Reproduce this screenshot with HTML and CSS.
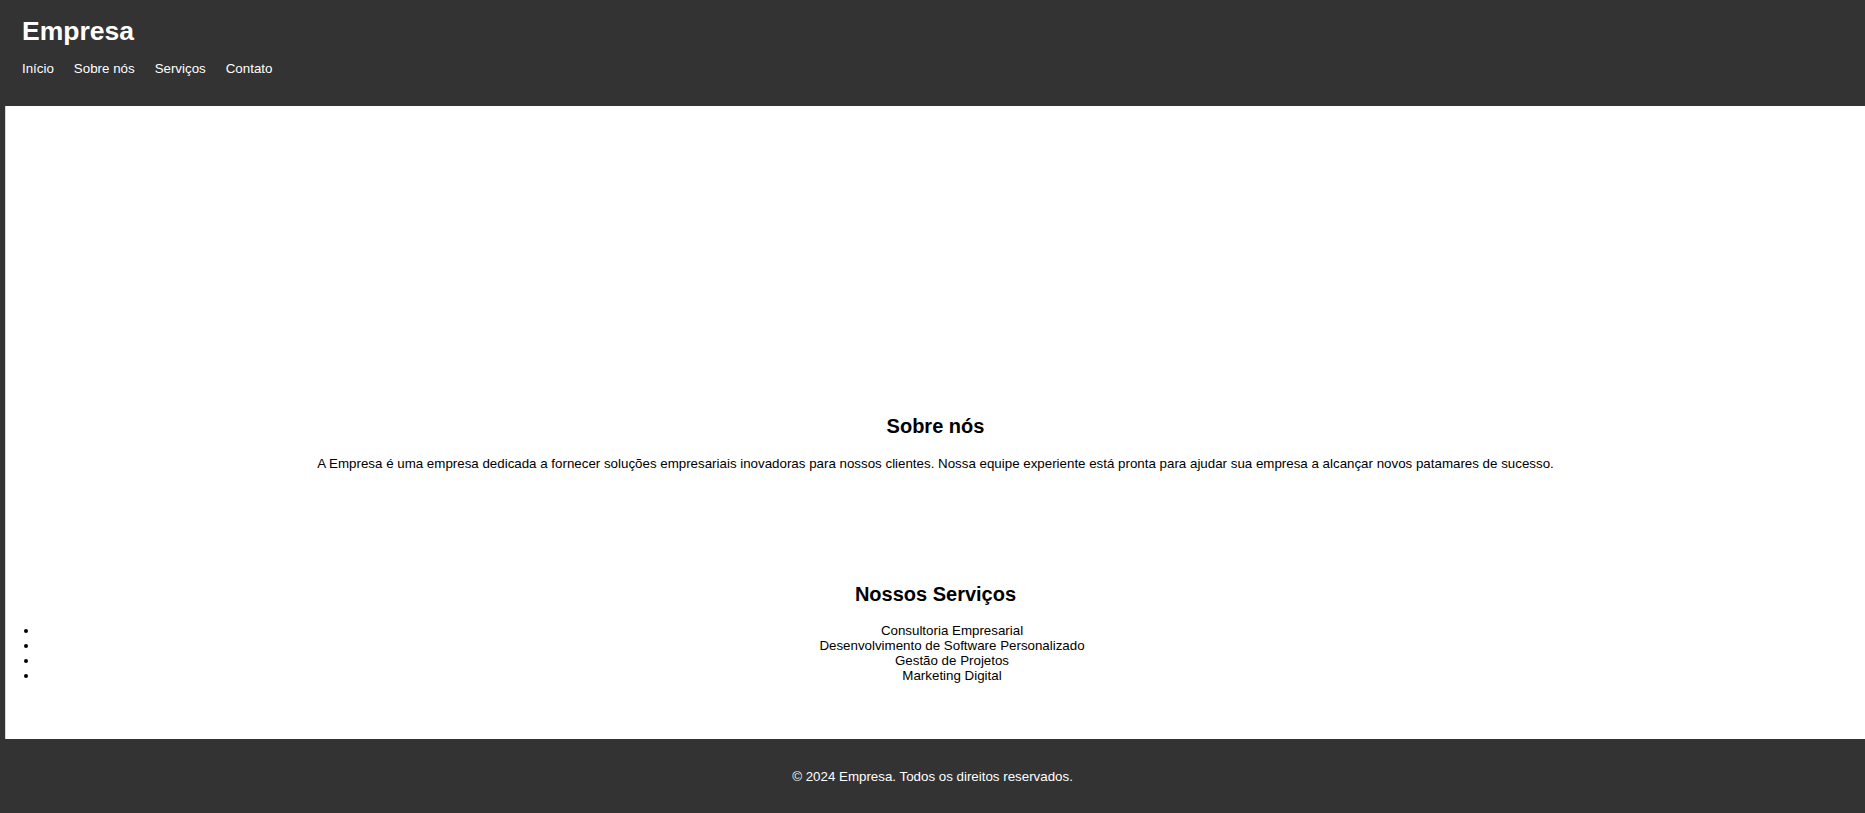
FILE: index.html
```html
<!DOCTYPE html>
<html lang="pt-BR">
<head>
<meta charset="UTF-8">
<title>Empresa</title>
<link rel="stylesheet" href="styles.css">
</head>
<body>
<header class="site-header">
  <h1 class="brand">Empresa</h1>
  <nav class="main-nav">
    <a href="#inicio">Início</a>
    <a href="#sobre">Sobre nós</a>
    <a href="#servicos">Serviços</a>
    <a href="#contato">Contato</a>
  </nav>
</header>
<main class="content">
  <section class="hero" id="inicio"></section>
  <section class="block" id="sobre">
    <h2 class="block-title">Sobre nós</h2>
    <p class="block-text">A Empresa é uma empresa dedicada a fornecer soluções empresariais inovadoras para nossos clientes. Nossa equipe experiente está pronta para ajudar sua empresa a alcançar novos patamares de sucesso.</p>
  </section>
  <section class="block" id="servicos">
    <h2 class="block-title">Nossos Serviços</h2>
    <ul class="service-list">
      <li>Consultoria Empresarial</li>
      <li>Desenvolvimento de Software Personalizado</li>
      <li>Gestão de Projetos</li>
      <li>Marketing Digital</li>
    </ul>
  </section>
</main>
<footer class="site-footer" id="contato">
  <p class="copy">© 2024 Empresa. Todos os direitos reservados.</p>
</footer>
</body>
</html>
```

FILE: styles.css
```css
html, body {
  margin: 0;
  padding: 0;
}
body {
  background: #333333;
  font-family: "Liberation Sans", Arial, sans-serif;
  font-size: 13.33px;
  color: #000;
}
.site-header {
  background: #333333;
  color: #fff;
  padding: 16px 22px 30px;
}
.brand {
  margin: 0 0 15px;
  font-size: 26.5px;
  font-weight: bold;
  line-height: 30px;
}
.main-nav {
  display: flex;
  gap: 20px;
  line-height: 15px;
}
.main-nav a {
  color: #fff;
  text-decoration: none;
}
.content {
  background: #fff;
  margin-left: 5px;
  border-left: 1px solid #d6d6d6;
  display: flex;
  flex-direction: column;
}
.hero {
  height: 251.5px;
}
.block {
  padding: 41px 0;
  text-align: center;
}
#servicos {
  padding-bottom: 42px;
}
.block-title {
  font-size: 20px;
  margin: 16.6px 0 17.6px;
  line-height: 23px;
}
.block-text {
  margin: 13.33px 0;
  line-height: normal;
}
.service-list {
  margin: 17.6px 0 13.33px;
  padding-left: 33px;
  line-height: normal;
}
.site-footer {
  background: #333333;
  color: #fff;
  text-align: center;
  padding: 30px 0;
}
.copy {
  margin: 0;
  line-height: 15px;
}
```
